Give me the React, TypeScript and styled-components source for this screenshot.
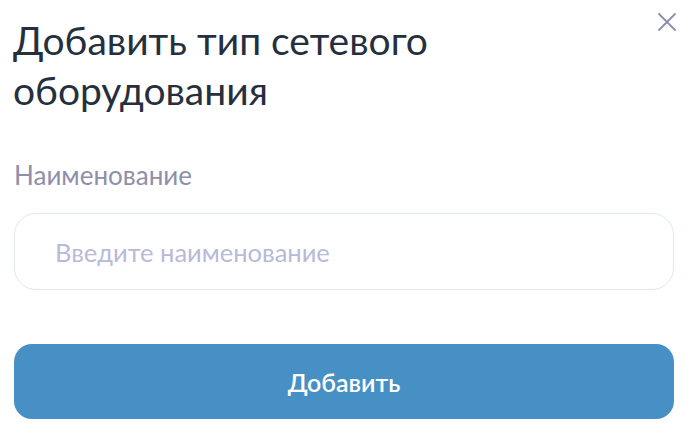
import styled, { createGlobalStyle } from "styled-components";

const GlobalStyle = createGlobalStyle`
  html, body {
    margin: 0;
    padding: 0;
    background: #ffffff;
  }
  body {
    font-family: Lato, "Noto Sans", sans-serif;
  }
  * {
    box-sizing: border-box;
  }
`;

const Modal = styled.div`
  position: relative;
  width: 690px;
  height: 436px;
  padding: 15px 16px 0 14px;
  display: flex;
  flex-direction: column;
  background: #ffffff;
`;

const Title = styled.h1`
  margin: 0 0 0 -1px;
  padding-right: 60px;
  font-size: 39px;
  line-height: 50px;
  font-weight: 400;
  color: #252f3e;
`;

const CloseButton = styled.button`
  position: absolute;
  top: 12px;
  right: 13px;
  width: 20px;
  height: 20px;
  padding: 0;
  border: none;
  background: none;
  display: flex;
  align-items: center;
  justify-content: center;
  cursor: pointer;
`;

const Field = styled.label`
  margin-top: 45px;
  display: flex;
  flex-direction: column;
  gap: 23px;
`;

const LabelText = styled.span`
  font-size: 26px;
  line-height: 30px;
  color: #8f8fab;
`;

const Input = styled.input`
  height: 77px;
  width: 100%;
  padding: 0 40px;
  border: 1px solid #dde9ef;
  border-radius: 22px;
  font-family: inherit;
  font-size: 25.5px;
  color: #252f3e;
  outline: none;

  &::placeholder {
    color: #b8bad8;
  }
`;

const SubmitButton = styled.button`
  margin-top: 54px;
  height: 75px;
  width: 100%;
  border: none;
  border-radius: 18px;
  background: #4790c5;
  color: #ffffff;
  font-family: inherit;
  font-size: 25px;
  font-weight: 600;
  cursor: pointer;
`;

function App() {
  return (
    <>
      <GlobalStyle />
      <Modal>
        <CloseButton aria-label="Закрыть">
          <svg width="20" height="20" viewBox="0 0 20 20" fill="none">
            <path
              d="M2 2 L18 18 M18 2 L2 18"
              stroke="#8d8dae"
              strokeWidth="1.8"
              strokeLinecap="round"
            />
          </svg>
        </CloseButton>
        <Title>Добавить тип сетевого оборудования</Title>
        <Field>
          <LabelText>Наименование</LabelText>
          <Input placeholder="Введите наименование" />
        </Field>
        <SubmitButton>Добавить</SubmitButton>
      </Modal>
    </>
  );
}

export default App;
